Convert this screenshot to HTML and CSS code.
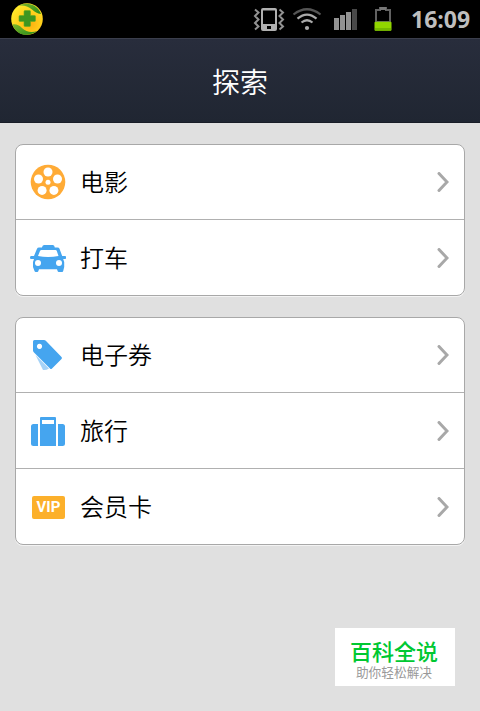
FILE: index.html
```html
<!DOCTYPE html>
<html lang="zh-CN">
<head>
<meta charset="utf-8">
<title>探索</title>
<link rel="stylesheet" href="styles.css">
</head>
<body>
<div class="status">
  <svg class="app-badge" width="34" height="34" viewBox="10 2 34 34">
    <defs>
      <radialGradient id="gold" cx=".6" cy=".65" r=".65"><stop offset="0" stop-color="#ffae10"/><stop offset=".55" stop-color="#ffd01c"/><stop offset="1" stop-color="#ffe82a"/></radialGradient>
      <linearGradient id="leaf" x1="0" y1="0" x2="1" y2="1"><stop offset="0" stop-color="#7fb82a"/><stop offset="1" stop-color="#258a1a"/></linearGradient>
    </defs>
    <circle cx="27" cy="19" r="15.8" fill="url(#gold)"/>
    <path d="M18 5.800C27 1 38 4.500 41 14C37 13.500 35 12 32 9.500C28 6 23 4.800 18 5.800Z" fill="url(#leaf)"/>
    <path d="M12.500 24.500C16 23.800 19 25 22 28C26 32 32 33 37 31C29 37.500 16 36 12.500 24.500Z" fill="url(#leaf)"/>
    <path d="M25 10.500h4.500q1 0 1 1v4h4q1 0 1 1v4q0 1-1 1h-4v4q0 1-1 1H25q-1 0-1-1v-4h-4q-1 0-1-1v-4q0-1 1-1h4v-4q0-1 1-1Z" fill="#3d9620" stroke="#68ac20" stroke-width=".6"/>
  </svg>
  <div class="indicators">
    <svg class="vibrate" width="32" height="24" viewBox="253 7 32 24">
      <path d="M255 9.500l3.500 3-3.500 3.500 3.500 3.500-3.500 3.500 3.500 3.500-3.500 3M279.500 9.500l3.500 3-3.500 3.500 3.500 3.500-3.500 3.500 3.500 3.500-3.500 3" fill="none" stroke="#929292" stroke-width="2"/>
      <path fill-rule="evenodd" d="M263 8h12a2 2 0 0 1 2 2v19a2 2 0 0 1-2 2h-12a2 2 0 0 1-2-2V10a2 2 0 0 1 2-2ZM263 10.500V24h12V10.500ZM267 26v3h4v-3Z" fill="#b0b0b0"/>
    </svg>
    <svg class="wifi" width="30" height="24" viewBox="292 7 30 24" fill="none" stroke-width="2.200">
      <path d="M293.500 14.500Q307 4 320.500 14.500" stroke="#555"/>
      <path d="M297.500 18.700Q307 10.500 316.500 18.700M301.500 22.500Q307 18 312.500 22.500" stroke="#aaa"/>
      <circle cx="307" cy="28" r="2.100" fill="#aaa"/>
    </svg>
    <svg class="signal" width="25" height="24" viewBox="333 7 25 24">
      <path d="M334 18h5v12h-5zM340 15h5v15h-5zM346 12h5v18h-5z" fill="#929292"/><path d="M352 9h5v21h-5z" fill="#484848"/>
    </svg>
    <svg class="battery" width="20" height="26" viewBox="373 6 20 26">
      <path d="M380 10V8h6v2h4v12h-14V10Z" fill="none" stroke="#626262" stroke-width="2"/>
      <path d="M380 7h6v3h-6z" fill="#777"/>
      <rect x="374.500" y="21.700" width="17" height="9" rx="1" fill="#91d600"/><path d="M375 28h16v2.500h-16z" fill="#75b900"/>
    </svg>
    <span class="clock">16:09</span>
  </div>
</div>
<header class="titlebar"><h1>探索</h1></header>
<main>
  <section class="card">
    <a class="row">
      <svg class="icon" viewBox="30 164 36 36"><circle cx="48" cy="182" r="17.300" fill="#ffab36"/><g fill="#fff"><circle cx="48" cy="172" r="4.500"/><circle cx="57.500" cy="179" r="4.500"/><circle cx="53.900" cy="190.400" r="4.500"/><circle cx="42.100" cy="190.400" r="4.500"/><circle cx="38.500" cy="179" r="4.500"/><circle cx="48" cy="182.200" r="2.500"/></g></svg>
      <span class="label">电影</span>
      <svg class="chevron" viewBox="0 0 12 20"><path d="M2 1.500l8 8.500-8 8.500"/></svg>
    </a>
    <a class="row">
      <svg class="icon" viewBox="30 240 36 36"><path fill="#45a5ef" d="M44 245h9q1.500 0 1.800 2.500h2.700q1.500 0 2 1.200l2.700 7.300h3q1 0 1 1.500t-1 1.500h-2l1 3v5l-1 4q-.3 1-1 1h-3.500q-.8 0-1-.8l-.7-2H39l-.7 2q-.2.800-1 .8h-1.500q-1 0-1.300-1L33 267v-5l1-3h-3q-1 0-1-1.500t1-1.500h3l3-7.300q.5-1.200 2-1.200h3q.3-2.500 2-2.500Z"/><path fill="#fff" d="M41.500 250h14q1 0 1.300 1l1.700 5q-10.500 2-20.500 0l2-5q.4-1 1.500-1Z"/><circle cx="38" cy="263" r="3" fill="#fff"/><circle cx="59" cy="263" r="3" fill="#fff"/></svg>
      <span class="label">打车</span>
      <svg class="chevron" viewBox="0 0 12 20"><path d="M2 1.500l8 8.500-8 8.500"/></svg>
    </a>
  </section>
  <section class="card">
    <a class="row">
      <svg class="icon" viewBox="30 337 36 36"><path fill="#a5d2f7" d="M35.500 355L49 368.500Q46 370.500 43 370Z"/><path fill="#45a5ef" fill-rule="evenodd" d="M34.500 340H44q1 0 1.800.8L61.500 357q1 1 0 2L52 368.500q-1 1-2 0L34 352.500q-1-.8-1-2v-9q0-1.500 1.500-1.500ZM39.500 343.800a2.600 2.600 0 1 0 .01 0Z"/></svg>
      <span class="label">电子券</span>
      <svg class="chevron" viewBox="0 0 12 20"><path d="M2 1.500l8 8.500-8 8.500"/></svg>
    </a>
    <a class="row tall">
      <svg class="icon" viewBox="30 413 36 36"><g fill="#45a5ef"><path d="M33.500 424H38v22h-4.500q-2.500 0-2.500-2.500v-17q0-2.500 2.500-2.500ZM58 424h4.500q2.500 0 2.500 2.500v17q0 2.500-2.500 2.500H58Z"/><path fill-rule="evenodd" d="M41 417h14q1 0 1 1v28H40v-28q0-1 1-1ZM42 420v4h12v-4Z"/></g></svg>
      <span class="label">旅行</span>
      <svg class="chevron" viewBox="0 0 12 20"><path d="M2 1.500l8 8.500-8 8.500"/></svg>
    </a>
    <a class="row">
      <span class="icon vip"><span class="vip-tag"><b>VIP</b></span></span>
      <span class="label">会员卡</span>
      <svg class="chevron" viewBox="0 0 12 20"><path d="M2 1.500l8 8.500-8 8.500"/></svg>
    </a>
  </section>
</main>
<aside class="watermark"><strong>百科全说</strong><small>助你轻松解决</small></aside>
</body>
</html>
```
FILE: styles.css
```css
* { box-sizing: border-box; }
body {
  margin: 0;
  height: 711px;
  overflow: hidden;
  background: #e0e0e0;
  color: #000;
  font-family: "Noto Sans CJK SC", sans-serif;
}
svg { display: block; flex: none; }
.status {
  height: 38px;
  padding: 0 10px;
  background: #000;
  display: flex;
  align-items: center;
  justify-content: space-between;
}
.indicators { display: flex; align-items: center; }
.wifi { margin-left: 7px; }
.signal { margin-left: 11px; }
.battery { margin-left: 15px; }
.clock {
  width: 59px;
  margin-left: 18px;
  color: #bebebe;
  font: bold 23px/38px "Open Sans", sans-serif;
  white-space: nowrap;
}
.titlebar {
  height: 85px;
  display: flex;
  align-items: center;
  justify-content: center;
  background: linear-gradient(#282d3c, #202632);
  border-top: 1px solid #3b3e4c;
  border-bottom: 1px solid #191d27;
}
h1 {
  margin: 0;
  color: #fff;
  font-size: 28px;
  line-height: 40px;
  font-weight: 350;
}
main {
  padding: 21px 15px 0;
  display: flex;
  flex-direction: column;
  gap: 21px;
}
.card {
  border: 1px solid #a8a8a8;
  border-radius: 8px;
  background: #fff;
  box-shadow: 0 1px 0 #f3f3f3;
}
.row {
  height: 75px;
  padding: 0 15px 0 14px;
  display: flex;
  align-items: center;
}
.row.tall { height: 76px; }
.row:not(:last-child) { border-bottom: 1px solid #b0b0b0; }
.icon { width: 36px; height: 36px; flex: none; }
.label {
  margin-left: 14px;
  padding-bottom: 2px;
  flex: 1;
  font-size: 24px;
  line-height: 36px;
  font-weight: 350;
}
.chevron {
  width: 12px;
  height: 20px;
  fill: none;
  stroke: #a8a8a8;
  stroke-width: 3;
  stroke-linecap: round;
}
.vip { display: flex; align-items: center; justify-content: center; }
.vip-tag {
  width: 33px;
  height: 23px;
  margin: 1px 0 0 1px;
  border-radius: 2px;
  background: #fcb02b;
  color: #fff;
  display: flex;
  align-items: center;
  justify-content: center;
}
.vip-tag b { font: bold 15px/22px Roboto, sans-serif; }
.watermark {
  position: absolute;
  left: 335px;
  top: 628px;
  width: 120px;
  height: 58px;
  padding: 9px 2px 0 0;
  background: #fff;
  display: flex;
  flex-direction: column;
  align-items: center;
}
.watermark strong {
  color: #00c832;
  font-size: 22px;
  line-height: 26px;
  font-weight: 500;
}
.watermark small {
  color: #999;
  font-size: 12.700px;
  line-height: 17px;
}
```
